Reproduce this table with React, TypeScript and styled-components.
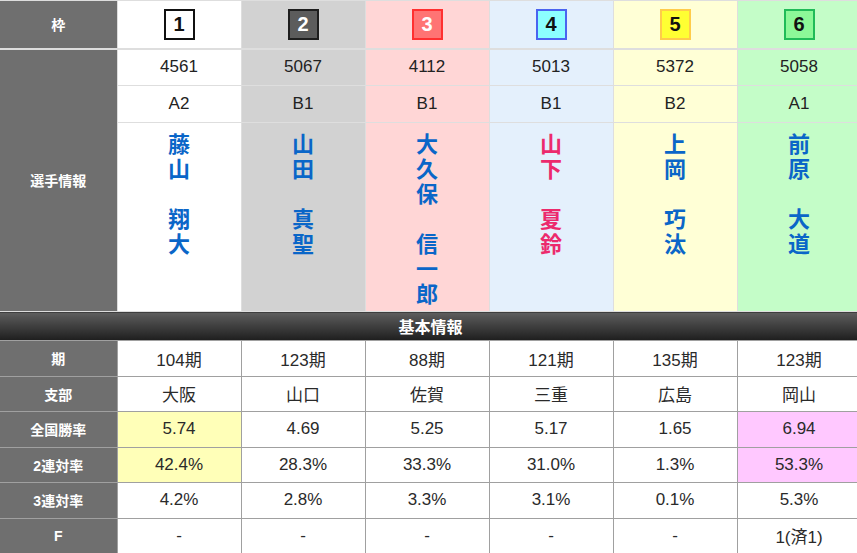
import { createGlobalStyle, styled } from "styled-components"

const GlobalStyle = createGlobalStyle`
    html, body {
        margin: 0;
        padding: 0;
        background: #ffffff;
        overflow: hidden;
    }
`

type Frame = {
    bg: string
    badgeBg: string
    badgeBorder: string
    badgeText: string
}

const frames: Frame[] = [
    { bg: "#ffffff", badgeBg: "#ffffff", badgeBorder: "#111111", badgeText: "#111111" },
    { bg: "#d2d2d2", badgeBg: "#5c5c5c", badgeBorder: "#1e1e1e", badgeText: "#ffffff" },
    { bg: "#ffd6d6", badgeBg: "#ff7474", badgeBorder: "#ff3030", badgeText: "#ffffff" },
    { bg: "#e4f0fc", badgeBg: "#8cffff", badgeBorder: "#4a64f0", badgeText: "#111111" },
    { bg: "#ffffd6", badgeBg: "#ffff33", badgeBorder: "#ffcc4a", badgeText: "#111111" },
    { bg: "#c4fdc8", badgeBg: "#8cf898", badgeBorder: "#20bb58", badgeText: "#111111" },
]

type Player = {
    no: string
    cls: string
    sei: string
    mei: string
    female?: boolean
    period: string
    branch: string
    win: string
    two: string
    three: string
    f: string
    mark?: "yellow" | "pink"
}

const players: Player[] = [
    { no: "4561", cls: "A2", sei: "藤山", mei: "翔大", period: "104期", branch: "大阪", win: "5.74", two: "42.4%", three: "4.2%", f: "-", mark: "yellow" },
    { no: "5067", cls: "B1", sei: "山田", mei: "真聖", period: "123期", branch: "山口", win: "4.69", two: "28.3%", three: "2.8%", f: "-" },
    { no: "4112", cls: "B1", sei: "大久保", mei: "信一郎", period: "88期", branch: "佐賀", win: "5.25", two: "33.3%", three: "3.3%", f: "-" },
    { no: "5013", cls: "B1", sei: "山下", mei: "夏鈴", female: true, period: "121期", branch: "三重", win: "5.17", two: "31.0%", three: "3.1%", f: "-" },
    { no: "5372", cls: "B2", sei: "上岡", mei: "巧汰", period: "135期", branch: "広島", win: "1.65", two: "1.3%", three: "0.1%", f: "-" },
    { no: "5058", cls: "A1", sei: "前原", mei: "大道", period: "123期", branch: "岡山", win: "6.94", two: "53.3%", three: "5.3%", f: "1(済1)", mark: "pink" },
]

const markColors = { yellow: "#ffffb8", pink: "#ffc8ff" }

const Table = styled.table`
    border-collapse: collapse;
    table-layout: fixed;
    width: 861px;
    font-family: "Liberation Sans", "Noto Sans CJK JP", sans-serif;
    color: #222222;
`
const LabelCol = styled.col`
    width: 117px;
`
const DataCol = styled.col`
    width: 124px;
`
const Label = styled.th<{ $light?: boolean; $thick?: boolean }>`
    background: #6f6f6f;
    color: #ffffff;
    font-size: 14px;
    font-weight: bold;
    text-align: center;
    vertical-align: middle;
    padding: 0;
    border: 1px solid ${p => (p.$light ? "#dddddd" : "#a0a0a0")};
    border-left: none;
    border-bottom-width: ${p => (p.$thick ? "2px" : "1px")};
`
const TopCell = styled.td<{ $bg: string; $thick?: boolean }>`
    background: ${p => p.$bg};
    border: 1px solid #dedede;
    border-bottom-width: ${p => (p.$thick ? "2px" : "1px")};
    text-align: center;
    vertical-align: middle;
    font-size: 17px;
    padding: 0;
`
const HeadRow = styled.tr`
    height: 48px;
`
const InfoRow = styled.tr`
    height: 37px;
`
const NameRow = styled.tr`
    height: 189px;
`
const Badge = styled.div<{ $bg: string; $border: string; $color: string }>`
    box-sizing: border-box;
    width: 31px;
    height: 31px;
    margin: 0 auto;
    display: flex;
    align-items: center;
    justify-content: center;
    background: ${p => p.$bg};
    border: 2px solid ${p => p.$border};
    color: ${p => p.$color};
    font-size: 20px;
    font-weight: bold;
`
const NameCell = styled(TopCell)`
    vertical-align: top;
    padding-top: 7px;
`
const Name = styled.div<{ $female?: boolean }>`
    display: flex;
    flex-direction: column;
    align-items: center;
    font-family: "Noto Sans CJK JP", sans-serif;
    font-size: 22px;
    font-weight: bold;
    line-height: 25px;
    color: ${p => (p.$female ? "#ec2a6c" : "#0a66c8")};
`
const Char = styled.span`
    height: 25px;
`
const BannerCell = styled.td`
    height: 28px;
    padding: 0;
    background: linear-gradient(#5e5e5e, #1e1e1e);
    color: #ffffff;
    font-size: 16px;
    font-weight: bold;
    text-align: center;
    border: none;
`
const BasicRow = styled.tr`
    height: 35.5px;
`
const Cell = styled.td<{ $mark?: string }>`
    background: ${p => p.$mark ?? "#ffffff"};
    border: 1px solid #a0a0a0;
    text-align: center;
    vertical-align: middle;
    font-size: 17px;
    color: #2a2a2a;
    padding: 0;
`

function PlayerName({ player }: { player: Player }) {
    const chars = [...player.sei.split(""), "", ...player.mei.split("")]
    return (
        <Name $female={player.female}>
            {chars.map((c, i) => (
                <Char key={i}>{c}</Char>
            ))}
        </Name>
    )
}

type Field = "period" | "branch" | "win" | "two" | "three" | "f"

const basicRows: { label: string; field: Field; marked?: boolean }[] = [
    { label: "期", field: "period" },
    { label: "支部", field: "branch" },
    { label: "全国勝率", field: "win", marked: true },
    { label: "2連対率", field: "two", marked: true },
    { label: "3連対率", field: "three" },
    { label: "F", field: "f" },
]

export default function App() {
    return (
        <>
            <GlobalStyle />
            <Table>
                <colgroup>
                    <LabelCol />
                    {frames.map((_, i) => (
                        <DataCol key={i} />
                    ))}
                </colgroup>
                <tbody>
                    <HeadRow>
                        <Label $light $thick>枠</Label>
                        {frames.map((f, i) => (
                            <TopCell key={i} $bg={f.bg} $thick>
                                <Badge $bg={f.badgeBg} $border={f.badgeBorder} $color={f.badgeText}>
                                    {i + 1}
                                </Badge>
                            </TopCell>
                        ))}
                    </HeadRow>
                    <InfoRow>
                        <Label $light rowSpan={3}>選手情報</Label>
                        {players.map((p, i) => (
                            <TopCell key={i} $bg={frames[i].bg}>{p.no}</TopCell>
                        ))}
                    </InfoRow>
                    <InfoRow>
                        {players.map((p, i) => (
                            <TopCell key={i} $bg={frames[i].bg}>{p.cls}</TopCell>
                        ))}
                    </InfoRow>
                    <NameRow>
                        {players.map((p, i) => (
                            <NameCell key={i} $bg={frames[i].bg}>
                                <PlayerName player={p} />
                            </NameCell>
                        ))}
                    </NameRow>
                    <tr>
                        <BannerCell colSpan={7}>基本情報</BannerCell>
                    </tr>
                    {basicRows.map(row => (
                        <BasicRow key={row.field}>
                            <Label>{row.label}</Label>
                            {players.map((p, i) => (
                                <Cell key={i} $mark={row.marked && p.mark ? markColors[p.mark] : undefined}>
                                    {p[row.field]}
                                </Cell>
                            ))}
                        </BasicRow>
                    ))}
                </tbody>
            </Table>
        </>
    )
}
